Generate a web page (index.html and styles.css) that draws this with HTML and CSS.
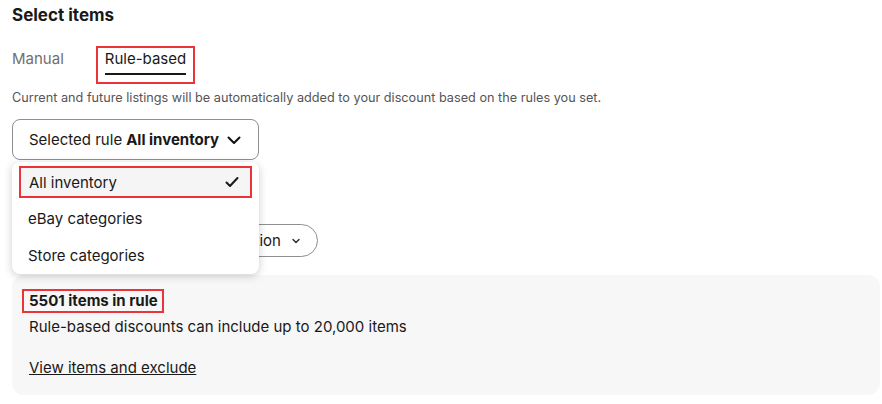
FILE: index.html
```html
<!DOCTYPE html>
<html>
<head>
<meta charset="utf-8">
<link rel="stylesheet" href="styles.css">
</head>
<body>
<div class="page">
  <h2 class="title">Select items</h2>
  <div class="tabs">
    <div class="tab">Manual</div>
    <div class="tab-wrap highlight"><div class="tab active">Rule-based</div></div>
  </div>
  <p class="desc">Current and future listings will be automatically added to your discount based on the rules you set.</p>
  <div class="select-area">
    <button class="select-btn">Selected rule <b>All inventory</b>
      <svg class="chev" width="16" height="16" viewBox="0 0 16 16"><path d="M2.5 5.5 8 11l5.5-5.5" fill="none" stroke="#111" stroke-width="2" stroke-linecap="round" stroke-linejoin="round"/></svg>
    </button>
    <div class="menu">
      <div class="item selected highlight"><span>All inventory</span>
        <svg width="16" height="16" viewBox="0 0 16 16"><path d="M2.5 8.5 6 12l7.5-8" fill="none" stroke="#191919" stroke-width="2" stroke-linecap="round" stroke-linejoin="round"/></svg>
      </div>
      <div class="item">eBay categories</div>
      <div class="item last">Store categories</div>
    </div>
  </div>
  <div class="filters">
    <button class="pill">Filter by condition
      <svg width="10" height="10" viewBox="0 0 10 10"><path d="M2 3.5 5 6.5l3-3" fill="none" stroke="#333" stroke-width="1.5" stroke-linecap="round" stroke-linejoin="round"/></svg>
    </button>
  </div>
  <div class="panel">
    <div class="count highlight">5501 items in rule</div>
    <p class="note">Rule-based discounts can include up to 20,000 items</p>
    <a class="link" href="#">View items and exclude</a>
  </div>
</div>
</body>
</html>
```
FILE: styles.css
```css
* { box-sizing: border-box; }
html, body { margin: 0; padding: 0; background: #fff; }
body { font-family: Inter, "Open Sans", Arial, sans-serif; color: #191919; }
.page { padding: 4px 2px 0 12px; width: 882px; }
.title { font-size: 17px; font-weight: 700; margin: 0; line-height: 22px; }
.tabs { display: flex; align-items: flex-start; margin-top: 20px; gap: 32px; }
.tab { font-size: 15px; color: #707070; line-height: 22px; padding-top: 2px; }
.tab-wrap { padding: 2px 9px 9px 9px; }
.tab.active { color: #191919; border-bottom: 2px solid #191919; padding-top: 0; padding-bottom: 3px; }
.highlight { outline: 2px solid #e8343a; outline-offset: -2px; }
.desc { font-size: 12.7px; color: #555; margin: 6px 0 0; line-height: 16px; }
.select-area { position: relative; margin-top: 13px; }
.select-btn { display: flex; align-items: center; width: 247px; height: 41px; padding: 0 16px; border: 1px solid #8f8f8f; border-radius: 8px; background: #fff; font-family: inherit; font-size: 15px; color: #191919; gap: 4px; }
.select-btn b { font-weight: 700; }
.chev { margin-left: auto; }
.menu { position: absolute; top: 43px; left: 0; width: 247px; background: #fff; border-radius: 8px; box-shadow: 0 2px 8px rgba(0,0,0,0.2); padding: 4px 4px 0 4px; z-index: 2; }
.item { display: flex; align-items: center; justify-content: space-between; height: 37px; padding: 0 12px; font-size: 15px; color: #191919; }
.item.last { height: 37px; }
.item.selected { background: #f5f5f5; height: 32px; padding: 0 12px 0 10px; margin: 0 3px 2px 3px; }
.filters { display: flex; margin-top: 64px; }
.pill { height: 33px; margin-left: 125px; padding: 0 16px; border: 1px solid #8f8f8f; border-radius: 17px; background: #fff; font-family: inherit; font-size: 15px; color: #191919; display: flex; align-items: center; gap: 10px; }
.panel { margin-top: 18px; background: #f7f7f7; border-radius: 12px; height: 120px; padding: 14px 17px; }
.count { display: inline-block; font-size: 15px; font-weight: 700; padding: 2px 6px 2px 7px; margin-left: -7px; line-height: 20px; height: 24px; }
.note { margin: 4px 0 0; font-size: 15px; line-height: 20px; color: #191919; }
.link { display: inline-block; margin-top: 21px; font-size: 15px; color: #191919; text-decoration: underline; line-height: 20px; }
```
